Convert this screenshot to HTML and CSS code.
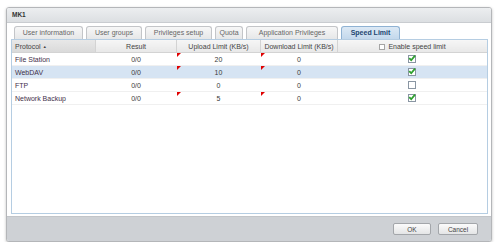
FILE: index.html
```html
<!DOCTYPE html>
<html lang="en">
  <head>
    <meta charset="UTF-8" />
    <title>MK1</title>
    <link rel="stylesheet" href="styles.css">
  </head>
  <body>
    <div class="window">
      <div class="titlebar">MK1</div>

      <div class="content">
        <div class="tabs">
          <div class="tab t1">User information</div>
          <div class="tab t2">User groups</div>
          <div class="tab t3">Privileges setup</div>
          <div class="tab t4">Quota</div>
          <div class="tab t5">Application Privileges</div>
          <div class="tab t6 active">Speed Limit</div>
        </div>

        <div class="grid">
          <table>
            <thead>
              <tr>
                <th class="c-proto sorted">Protocol <span class="arrow">&#9650;</span></th>
                <th class="c-result">Result</th>
                <th class="c-up">Upload Limit (KB/s)</th>
                <th class="c-down">Download Limit (KB/s)</th>
                <th class="c-enable"><span class="box"></span>Enable speed limit</th>
              </tr>
            </thead>
            <tbody>
              <tr>
                <td class="c-proto">File Station</td>
                <td>0/0</td>
                <td class="dirty">20</td>
                <td class="dirty">0</td>
                <td><span class="box checked"><svg viewBox="0 0 8 8" width="8" height="8"><path d="M1.2 4.2 L3.2 6.2 L7 1.6" fill="none" stroke="#2ea12e" stroke-width="1.8"/></svg></span></td>
              </tr>
              <tr class="selected">
                <td class="c-proto">WebDAV</td>
                <td>0/0</td>
                <td class="dirty">10</td>
                <td class="dirty">0</td>
                <td><span class="box checked"><svg viewBox="0 0 8 8" width="8" height="8"><path d="M1.2 4.2 L3.2 6.2 L7 1.6" fill="none" stroke="#2ea12e" stroke-width="1.8"/></svg></span></td>
              </tr>
              <tr>
                <td class="c-proto">FTP</td>
                <td>0/0</td>
                <td>0</td>
                <td>0</td>
                <td><span class="box"></span></td>
              </tr>
              <tr>
                <td class="c-proto">Network Backup</td>
                <td>0/0</td>
                <td class="dirty">5</td>
                <td class="dirty">0</td>
                <td><span class="box checked"><svg viewBox="0 0 8 8" width="8" height="8"><path d="M1.2 4.2 L3.2 6.2 L7 1.6" fill="none" stroke="#2ea12e" stroke-width="1.8"/></svg></span></td>
              </tr>
            </tbody>
          </table>
        </div>
      </div>

      <div class="footer">
        <button class="btn ok">OK</button>
        <button class="btn cancel">Cancel</button>
      </div>
    </div>
  </body>
</html>
```

FILE: styles.css
```css
body {
  margin: 0;
  background: #fff;
  font-family: "Liberation Sans", Arial, sans-serif;
  font-size: 7px;
  color: #333;
}

.window {
  margin: 7px 0 0 6px;
  width: 484px;
  height: 233px;
  border: 1px solid #b4b6b9;
  border-radius: 3px;
  box-shadow: 0 1px 3px rgba(0, 0, 0, 0.25);
  display: flex;
  flex-direction: column;
  overflow: hidden;
  background: #fff;
}

.titlebar {
  height: 14px;
  line-height: 14px;
  padding-left: 5px;
  font-weight: 700;
  font-size: 6.5px;
  color: #333;
  background: linear-gradient(#eceef0, #dcdfe2);
  border-bottom: 1px solid #c9ccd0;
}

.content {
  flex: 1;
  padding: 3px 3px 2px 4px;
  display: flex;
  flex-direction: column;
}

.tabs {
  display: flex;
  gap: 3px;
  padding-left: 3px;
  height: 13px;
}

.tab {
  box-sizing: border-box;
  height: 13px;
  line-height: 12px;
  text-align: center;
  color: #666;
  border: 1px solid #c3c5c8;
  border-bottom: none;
  border-radius: 3px 3px 0 0;
  background: linear-gradient(#f7f7f7, #e6e7e8);
}

.t1 { width: 69px; }
.t2 { width: 56px; }
.t3 { width: 67px; }
.t4 { width: 28px; }
.t5 { width: 92px; }
.t6 { width: 59px; }

.tab.active {
  color: #1d4670;
  font-weight: 700;
  border-color: #8fb2d3;
  background: linear-gradient(#dce9f5, #c3d8ec);
}

.grid {
  flex: 1;
  border: 1px solid #b5cde2;
  background: #fff;
}

table {
  width: 100%;
  border-collapse: collapse;
  table-layout: fixed;
}

th {
  height: 12px;
  padding: 0;
  font-weight: 400;
  text-align: center;
  color: #444;
  background: linear-gradient(#f6f6f6, #e8e8e8);
  border-right: 1px solid #d3d3d3;
  border-bottom: 1px solid #d3d3d3;
}

th:last-child {
  border-right: none;
}

th.sorted {
  background: linear-gradient(#e8e8e8, #dadada);
}

.arrow {
  font-size: 4px;
  vertical-align: 1px;
}

.c-proto { width: 80px; text-align: left; padding-left: 3px; }
.c-result { width: 80px; }
.c-up { width: 83px; }
.c-down { width: 76px; }

td {
  height: 12px;
  padding: 0;
  text-align: center;
  color: #3a3a3a;
  border-bottom: 1px solid #f0f0f0;
}

td.c-proto {
  color: #43304a;
}

tr.selected td {
  background: #d6e4f3;
}

.dirty {
  position: relative;
}

.dirty::before {
  content: "";
  position: absolute;
  left: 0;
  top: 0;
  border-top: 4px solid #e00000;
  border-right: 4px solid transparent;
}

.box {
  display: inline-block;
  box-sizing: border-box;
  width: 8px;
  height: 8px;
  border: 1px solid #8a96a3;
  background: #fff;
  vertical-align: middle;
  position: relative;
}

th .box {
  width: 6px;
  height: 6px;
  border-color: #a5a5a5;
  margin-right: 3px;
  vertical-align: -1px;
}

.box svg {
  position: absolute;
  left: -1px;
  top: -2px;
}

.footer {
  height: 24px;
  background: #ced1d5;
  border-top: 1px solid #c2c5c9;
  display: flex;
  justify-content: flex-end;
  align-items: center;
  gap: 7px;
  padding-right: 13px;
}

.btn {
  height: 12px;
  padding: 0;
  font-family: "Liberation Sans", Arial, sans-serif;
  font-size: 6.5px;
  color: #444;
  border: 1px solid #a3a6aa;
  border-radius: 2px;
  background: linear-gradient(#fbfbfb, #e4e5e6);
}

.ok { width: 38px; }
.cancel { width: 40px; }
```
